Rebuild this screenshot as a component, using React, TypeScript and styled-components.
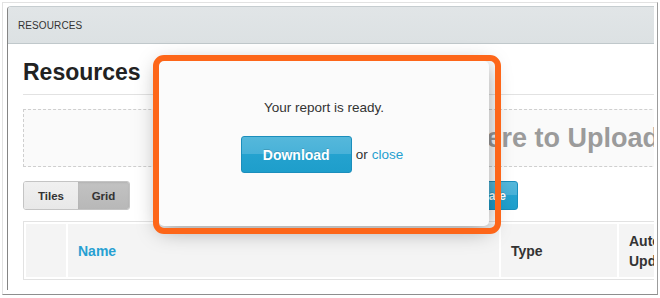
import styled, { createGlobalStyle } from 'styled-components';

const GlobalStyle = createGlobalStyle`
  html, body {
    margin: 0;
    padding: 0;
    background: #ffffff;
    font-family: 'Liberation Sans', Arial, Helvetica, sans-serif;
    color: #333333;
  }
`;

const Frame = styled.div`
  position: relative;
  box-sizing: border-box;
  margin: 2px;
  width: 656px;
  height: 293px;
  padding: 3px 3px 4px 4px;
  border: 1px solid #e2e2e2;
  border-right-color: #9c9c9c;
  border-bottom-color: #8e8e8e;
  background: #ffffff;
`;

const Panel = styled.section`
  box-sizing: border-box;
  height: 100%;
  border: 1px solid #c6cdd0;
  border-left-color: #858585;
  border-right: none;
  border-bottom: none;
  border-radius: 4px 0 0 0;
  overflow: hidden;
  background: #ffffff;
`;

const PanelHeader = styled.header`
  display: flex;
  align-items: center;
  height: 36px;
  padding-left: 10px;
  background: linear-gradient(#e1e5e7, #dce1e3);
  border-bottom: 1px solid #c0c8cb;
  font-size: 10px;
  letter-spacing: 0.1px;
  color: #333;
  text-transform: uppercase;
`;

const PanelBody = styled.div`
  width: 960px;
  padding-left: 15px;
`;

const PageTitle = styled.h1`
  margin: 15px 0 0;
  padding-bottom: 9px;
  border-bottom: 1px solid #e2e2e2;
  font-size: 23px;
  line-height: 26px;
  font-weight: 700;
  color: #222;
`;

const DropZone = styled.div`
  box-sizing: border-box;
  display: flex;
  align-items: center;
  height: 58px;
  margin-top: 14px;
  padding-left: 314px;
  border: 1px dashed #cfcfcf;
  background: #fafafa;
  font-size: 27px;
  font-weight: 700;
  color: #9b9b9b;
  white-space: nowrap;
`;

const Toolbar = styled.div`
  display: flex;
  align-items: center;
  height: 29px;
  margin-top: 14px;
`;

const Segmented = styled.div`
  display: flex;
  height: 100%;
  box-sizing: border-box;
  border: 1px solid #c4c4c4;
  border-radius: 3px;
  overflow: hidden;
`;

const SegmentButton = styled.button<{ $active?: boolean; $w: number }>`
  width: ${(p) => p.$w}px;
  border: none;
  padding: 0;
  font-family: inherit;
  font-size: 11.5px;
  font-weight: 700;
  color: #333;
  background: ${(p) =>
    p.$active
      ? 'linear-gradient(#c2c2c2, #b8b8b8)'
      : 'linear-gradient(#f0f0f0, #e8e8e8)'};
  box-shadow: ${(p) => (p.$active ? 'inset 0 1px 2px rgba(0,0,0,0.08)' : 'none')};
`;

const BlueButton = styled.button<{ $big?: boolean }>`
  box-sizing: border-box;
  height: ${(p) => (p.$big ? 37 : 29)}px;
  padding: 0 ${(p) => (p.$big ? 21 : 10)}px;
  border: 1px solid #1b8ebc;
  border-radius: 3px;
  background: linear-gradient(#55b8db 0%, #48b1d8 50%, #24a2cf 50%, #1e9ecb 100%);
  color: #ffffff;
  font-family: inherit;
  font-size: ${(p) => (p.$big ? 14 : 12)}px;
  font-weight: 700;
  text-shadow: 0 -1px 0 rgba(0, 0, 0, 0.15);
`;

const ToolbarAction = styled(BlueButton)`
  width: 76px;
  margin-left: 312px;
`;

const Table = styled.table`
  margin-top: 11px;
  border: 1px solid #e2e2e2;
  border-spacing: 2px;
  table-layout: fixed;
`;

const HeadCell = styled.th<{ $w: number; $link?: boolean }>`
  width: ${(p) => p.$w}px;
  height: 53px;
  padding: 0 10px;
  box-sizing: border-box;
  background: #f4f4f4;
  text-align: left;
  font-size: 14px;
  line-height: 20px;
  font-weight: 700;
  color: ${(p) => (p.$link ? '#27a0d2' : '#333')};
`;

const Modal = styled.div`
  position: absolute;
  left: 156px;
  top: 58px;
  width: 330px;
  height: 165px;
  box-sizing: border-box;
  padding-top: 38px;
  display: flex;
  flex-direction: column;
  align-items: center;
  background: #fbfbfb;
  border-radius: 5px;
  box-shadow: 0 4px 22px rgba(0, 0, 0, 0.38);
`;

const Message = styled.p`
  margin: 0;
  font-size: 13.5px;
  line-height: 18px;
  color: #333;
`;

const ActionRow = styled.div`
  display: flex;
  align-items: center;
  margin-top: 19px;
  margin-left: -4px;
  font-size: 13.5px;
  color: #333;
`;

const Or = styled.span`
  margin: 0 4px;
`;

const CloseLink = styled.a`
  color: #26a0d0;
  text-decoration: none;
`;

const Highlight = styled.div`
  position: absolute;
  left: 150px;
  top: 52px;
  width: 348px;
  height: 179px;
  box-sizing: border-box;
  border: 6px solid #fd6619;
  border-radius: 11px;
  pointer-events: none;
`;

export default function App() {
  return (
    <>
      <GlobalStyle />
      <Frame>
        <Panel>
          <PanelHeader>Resources</PanelHeader>
          <PanelBody>
            <PageTitle>Resources</PageTitle>
            <DropZone>Drop files here to Upload</DropZone>
            <Toolbar>
              <Segmented>
                <SegmentButton $w={54}>Tiles</SegmentButton>
                <SegmentButton $w={51} $active>
                  Grid
                </SegmentButton>
              </Segmented>
              <ToolbarAction>Generate</ToolbarAction>
            </Toolbar>
            <Table>
              <thead>
                <tr>
                  <HeadCell $w={40} />
                  <HeadCell $w={431} $link>
                    Name
                  </HeadCell>
                  <HeadCell $w={116}>Type</HeadCell>
                  <HeadCell $w={200}>
                    Auto
                    <br />
                    Update
                  </HeadCell>
                </tr>
              </thead>
            </Table>
          </PanelBody>
        </Panel>
        <Modal>
          <Message>Your report is ready.</Message>
          <ActionRow>
            <BlueButton $big>Download</BlueButton>
            <Or>or</Or>
            <CloseLink href="#">close</CloseLink>
          </ActionRow>
        </Modal>
        <Highlight />
      </Frame>
    </>
  );
}
